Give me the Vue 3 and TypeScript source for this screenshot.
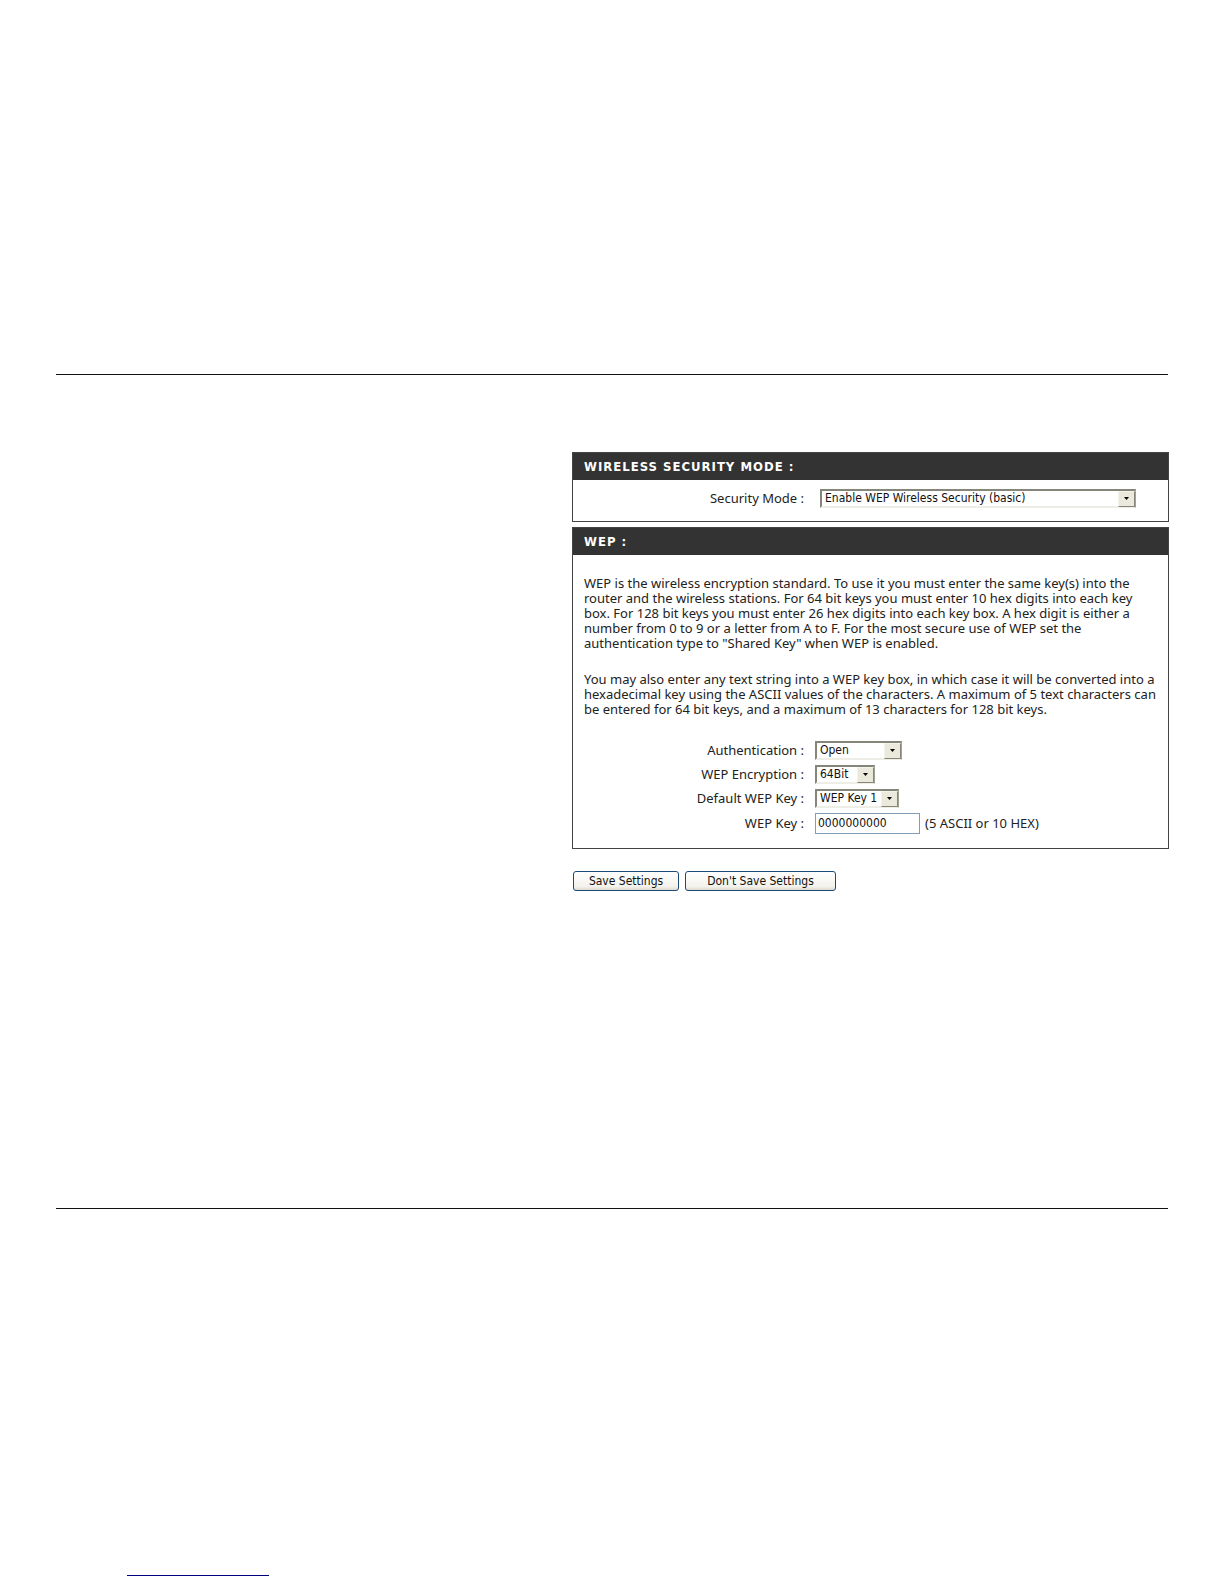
<script setup lang="ts">
import { ref } from 'vue'

interface SelectField {
  id: string
  label: string
  size: string
  options: string[]
}

const securityMode = ref('Enable WEP Wireless Security (basic)')
const wepKey = ref('0000000000')
const fields: SelectField[] = [
  { id: 'authentication', label: 'Authentication :', size: 'medium', options: ['Open', 'Shared Key'] },
  { id: 'encryption', label: 'WEP Encryption :', size: 'small', options: ['64Bit', '128Bit'] },
  { id: 'default-key', label: 'Default WEP Key :', size: 'regular', options: ['WEP Key 1', 'WEP Key 2', 'WEP Key 3', 'WEP Key 4'] },
]
</script>

<template>
  <div class="page">
    <main class="content">
      <form class="settings" @submit.prevent>
        <section class="panel mode-panel">
          <h2>WIRELESS SECURITY MODE :</h2>
          <div class="row mode-row">
            <label for="security-mode">Security Mode :</label>
            <span class="select large">
              <select id="security-mode" v-model="securityMode">
                <option>Enable WEP Wireless Security (basic)</option>
              </select>
              <span class="arrow"><svg width="5" height="3" viewBox="0 0 5 3"><path d="M0 0h5L2.500 3z" /></svg></span>
            </span>
          </div>
        </section>

        <section class="panel wep-panel">
          <h2>WEP :</h2>
          <p>
            WEP is the wireless encryption standard. To use it you must enter the same key(s) into the<br />
            router and the wireless stations. For 64 bit keys you must enter 10 hex digits into each key<br />
            box. For 128 bit keys you must enter 26 hex digits into each key box. A hex digit is either a<br />
            number from 0 to 9 or a letter from A to F. For the most secure use of WEP set the<br />
            authentication type to "Shared Key" when WEP is enabled.
          </p>
          <p>
            You may also enter any text string into a WEP key box, in which case it will be converted into a<br />
            hexadecimal key using the ASCII values of the characters. A maximum of 5 text characters can<br />
            be entered for 64 bit keys, and a maximum of 13 characters for 128 bit keys.
          </p>
          <div class="fields">
            <div v-for="field in fields" :key="field.id" class="row">
              <label :for="field.id">{{ field.label }}</label>
              <span class="select" :class="field.size">
                <select :id="field.id">
                  <option v-for="option in field.options" :key="option">{{ option }}</option>
                </select>
                <span class="arrow"><svg width="5" height="3" viewBox="0 0 5 3"><path d="M0 0h5L2.500 3z" /></svg></span>
              </span>
            </div>
            <div class="row key-row">
              <label for="wep-key">WEP Key :</label>
              <input id="wep-key" v-model="wepKey" type="text" />
              <span class="hint">(5 ASCII or 10 HEX)</span>
            </div>
          </div>
        </section>

        <div class="actions">
          <button type="submit" class="save">Save Settings</button>
          <button type="button" class="discard">Don't Save Settings</button>
        </div>
      </form>
    </main>
    <hr class="footer-line" />
  </div>
</template>

<style>
body {
  margin: 0;
  background: #fff;
}
</style>

<style scoped>
* {
  box-sizing: border-box;
}

.page {
  padding: 374px 56px 8px;
  color: #222;
  font-family: "Noto Sans", "DejaVu Sans", sans-serif;
  font-size: 13px;
  line-height: 15px;
}

.content {
  min-height: 835px;
  padding-top: 77px;
  border-top: 1px solid #111;
  border-bottom: 1px solid #111;
}

.settings {
  width: 597px;
  margin-right: -1px;
  margin-left: auto;
}

.panel {
  border: 1px solid #444;
}

.mode-panel {
  margin-bottom: 5px;
  padding-bottom: 13px;
}

.wep-panel {
  padding-bottom: 12px;
}

h2 {
  margin: 0 0 8px;
  padding-left: 11px;
  background: #333;
  color: #fff;
  font-family: "DejaVu Sans Condensed", "DejaVu Sans", sans-serif;
  font-size: 13px;
  line-height: 27px;
  letter-spacing: 1px;
}

p {
  margin: 0 0 21px 11px;
  white-space: nowrap;
}

.wep-panel h2 {
  margin-bottom: 21px;
}

.row {
  display: flex;
  align-items: center;
  gap: 11px;
  height: 24px;
}

.row label {
  width: 231px;
  text-align: right;
  white-space: nowrap;
}

.mode-row {
  gap: 16px;
  height: 20px;
}

.key-row {
  height: 26px;
}

.select {
  position: relative;
  display: flex;
}

.large { width: 316px; }
.medium { width: 87px; }
.regular { width: 84px; }
.small { width: 60px; }

select,
input,
button {
  margin: 0;
  color: #111;
  font-family: "DejaVu Sans Condensed", "DejaVu Sans", sans-serif;
  font-size: 12px;
}

select {
  width: 100%;
  height: 19px;
  padding: 0 0 0 3px;
  border: 2px solid #85857a;
  border-right-color: #a3a392;
  border-bottom-color: #eeeee6;
  border-radius: 0;
  background: #fff;
  appearance: none;
}

.arrow {
  position: absolute;
  top: 2px;
  right: 1px;
  bottom: 1px;
  display: flex;
  align-items: center;
  justify-content: center;
  width: 17px;
  border: 1px solid #f4f3e8;
  border-right-color: #85857a;
  border-bottom-color: #85857a;
  background: #ebe9dc;
  pointer-events: none;
}

input {
  width: 105px;
  height: 21px;
  padding: 0 2px;
  border: 1px solid #7f9db9;
  background: #fff;
}

.hint {
  margin-left: -6px;
}

.actions {
  display: flex;
  gap: 6px;
  margin-top: 22px;
  padding-left: 1px;
}

button {
  height: 20px;
  padding: 0;
  border: 1px solid #1f4b7a;
  border-radius: 3px;
  background: linear-gradient(#fff, #f3f2ec 80%, #dedbd0);
}

.save { width: 106px; }
.discard { width: 151px; }

.footer-line {
  width: 142px;
  margin: 366px 0 0 71px;
  border: 0;
  border-top: 1px solid #000080;
}
</style>
